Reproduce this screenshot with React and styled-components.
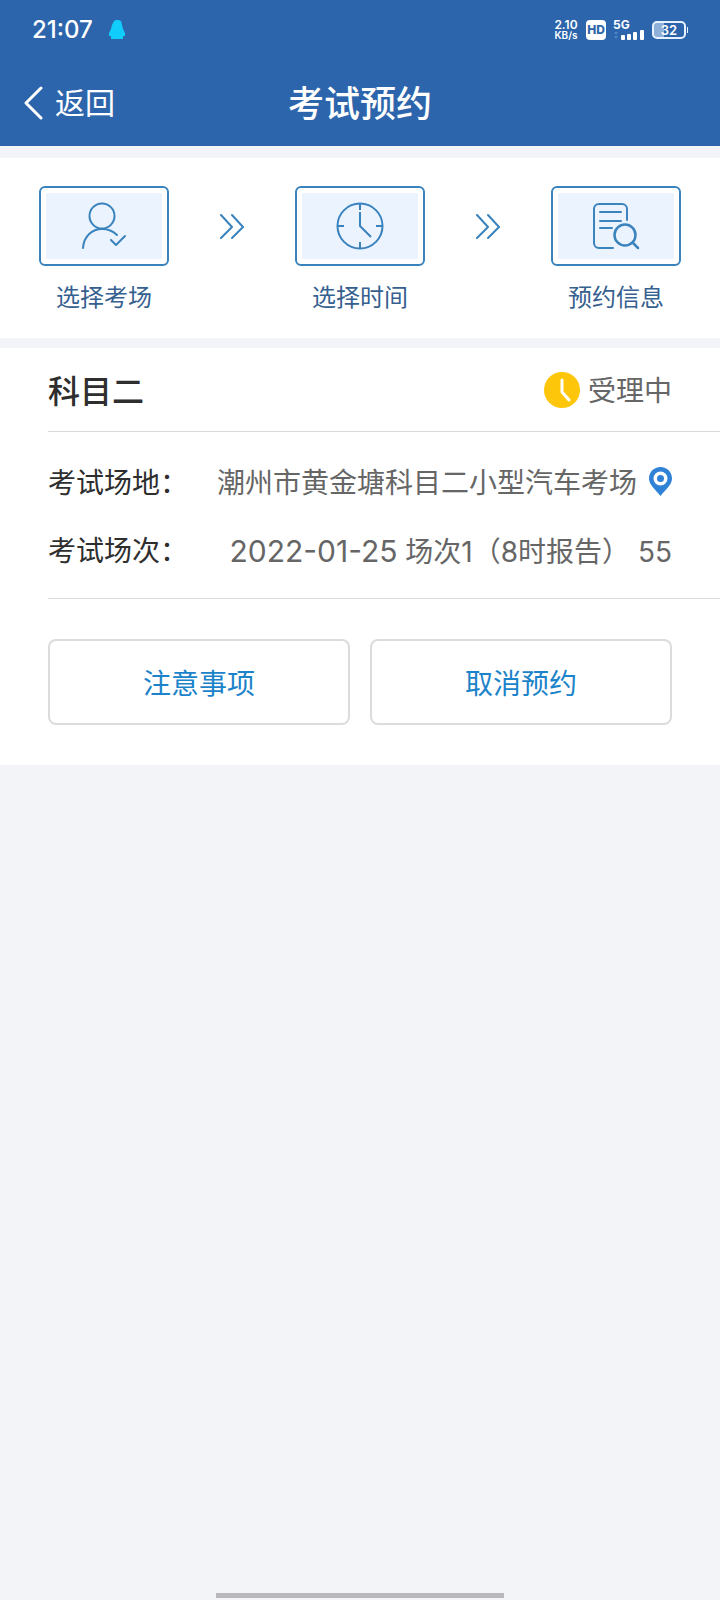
import React from "react";
import styled, { createGlobalStyle } from "styled-components";

const GlobalStyle = createGlobalStyle`
  *, *::before, *::after { box-sizing: border-box; }
  body {
    margin: 0;
    background: #f3f4f8;
    font-family: Inter, "Noto Sans CJK SC", sans-serif;
    color: #2e2e2e;
  }
  svg { display: block; flex: none; }
`;

const Page = styled.div`
  display: flex;
  flex-direction: column;
  min-height: 100vh;
`;

const Header = styled.header`
  background: #2c65ab;
  color: #fff;
`;

const StatusBar = styled.div`
  display: flex;
  align-items: center;
  justify-content: space-between;
  height: 60px;
  padding: 0 32px;
`;

const StatusGroup = styled.div`
  display: flex;
  align-items: center;
  gap: ${(p) => p.$gap}px;
`;

const Time = styled.span`
  font-size: 24px;
  line-height: 32px;
  font-weight: 500;
`;

const Speed = styled.div`
  display: flex;
  flex-direction: column;
  align-items: center;
  width: 26px;
  font-size: 12px;
  line-height: 10px;
  font-weight: 600;
`;

const SpeedUnit = styled.span`
  font-size: 10px;
`;

const HdBadge = styled.span`
  width: 20px;
  height: 20px;
  border-radius: 4px;
  background: #fff;
  color: #2c65ab;
  font-size: 12px;
  line-height: 20px;
  font-weight: 800;
  text-align: center;
`;

const Signal = styled.div`
  display: flex;
  flex-direction: column;
  width: 32px;
  font-size: 12px;
  line-height: 10px;
  font-weight: 700;
`;

const Battery = styled.span`
  display: flex;
  align-items: center;
  gap: 1px;
`;

const BatteryBody = styled.span`
  width: 34px;
  height: 18px;
  border: 2px solid #e6f2ff;
  border-radius: 5px;
  background: linear-gradient(to right, #8fb0d8 32%, transparent 32%);
  font-size: 13px;
  line-height: 14px;
  font-weight: 600;
  text-align: center;
`;

const BatteryTip = styled.span`
  width: 1px;
  height: 6px;
  background: #e6f2ff;
`;

const NavBar = styled.div`
  display: grid;
  grid-template-columns: 1fr auto 1fr;
  align-items: center;
  height: 86px;
  padding: 0 24px;
`;

const BackButton = styled.button`
  display: flex;
  align-items: center;
  justify-self: start;
  gap: 12px;
  padding: 0;
  border: 0;
  background: none;
  color: #fff;
  font: inherit;
  font-size: 30px;
  line-height: 40px;
`;

const Title = styled.h1`
  margin: 0;
  padding-top: 2px;
  font-size: 36px;
  line-height: 44px;
  font-weight: 500;
`;

const Main = styled.main`
  display: flex;
  flex-direction: column;
  gap: 10px;
  padding-top: 12px;
`;

const Steps = styled.ol`
  display: flex;
  justify-content: space-between;
  margin: 0;
  padding: 28px 39px 24px;
  background: #fff;
  list-style: none;
`;

const Step = styled.li`
  display: flex;
  flex-direction: column;
  align-items: center;
  gap: 16px;
  color: #35608f;
  font-size: 24px;
  line-height: 32px;
`;

const StepIcon = styled.div`
  display: flex;
  align-items: center;
  justify-content: center;
  width: 130px;
  height: 80px;
  padding: 5px;
  border: 2px solid #3a83bd;
  border-radius: 6px;
  background: #eaf3fe content-box;
`;

const StepArrow = styled.li`
  display: flex;
  align-items: center;
  height: 80px;
`;

const Card = styled.section`
  padding-left: 48px;
  background: #fff;
`;

const CardHead = styled.div`
  display: flex;
  align-items: center;
  justify-content: space-between;
  height: 84px;
  padding-right: 48px;
  border-bottom: 1px solid #d9d9d9;
`;

const Subject = styled.h2`
  margin: 0;
  padding-top: 4px;
  font-size: 32px;
  line-height: 40px;
  font-weight: 500;
`;

const State = styled.span`
  display: flex;
  align-items: center;
  gap: 8px;
  color: #666;
  font-size: 28px;
  line-height: 40px;
`;

const Details = styled.dl`
  margin: 0;
  padding: 16px 48px 14px 0;
  border-bottom: 1px solid #d9d9d9;
`;

const Detail = styled.div`
  display: flex;
  align-items: center;
  justify-content: space-between;
  height: 68px;
  font-size: 28px;
  line-height: 40px;
  white-space: nowrap;
`;

const Value = styled.dd`
  display: flex;
  align-items: center;
  gap: 12px;
  margin: 0;
  color: #666;
`;

const Text = styled.span`
  display: block;
  padding-top: 2px;
`;

const ExamDate = styled.time`
  font-size: 30px;
`;

const Actions = styled.div`
  display: grid;
  grid-template-columns: 1fr 1fr;
  gap: 20px;
  padding: 40px 48px 40px 0;
`;

const ActionButton = styled.button`
  height: 86px;
  padding: 4px 0 0;
  border: 2px solid #dcdcdc;
  border-radius: 8px;
  background: #fff;
  color: #1b83c9;
  font: inherit;
  font-size: 28px;
  line-height: 40px;
`;

const HomeBar = styled.div`
  align-self: center;
  width: 40%;
  height: 5px;
  margin: auto 0 2px;
  background: #b7b7bc;
`;

const stroke = {
  fill: "none",
  stroke: "#3a83bd",
  strokeWidth: 2,
  strokeLinecap: "round",
  strokeLinejoin: "round",
};

const PenguinIcon = () => (
  <svg width="16" height="20" viewBox="0 0 16 20" aria-hidden="true">
    <path d="M5 1l2-1h3l2 1 1 4 1 4 2 4v3h-2v3H2v-3H0v-3l2-4 1-4z" fill="#10cdfb" />
  </svg>
);

const BackIcon = () => (
  <svg width="19" height="34" viewBox="0 0 19 34" aria-hidden="true">
    <path d="M17 2 2 17l15 15" fill="none" stroke="#fff" strokeWidth="3" strokeLinecap="round" strokeLinejoin="round" />
  </svg>
);

const SignalBars = () => (
  <svg width="31" height="10" viewBox="0 0 31 10" aria-hidden="true">
    <path d="M1 2h4L3 5zM1 6h4L3 9z" fill="#4f86c6" />
    <g fill="#fff">
      <rect x="8" y="5" width="4" height="5" rx="1" />
      <rect x="14" y="4" width="4" height="6" rx="1" />
      <rect x="20" y="2" width="4" height="8" rx="1" />
      <rect x="27" y="0" width="4" height="10" rx="1" />
    </g>
  </svg>
);

const PersonIcon = () => (
  <svg width="46" height="48" viewBox="0 0 46 48" aria-hidden="true" {...stroke}>
    <circle cx="21" cy="14" r="12.500" />
    <path d="M2 46C3 34 11 27 21 27c6 0 11 2 15 6M30 38l5 5 9-9" />
  </svg>
);

const ClockIcon = () => (
  <svg width="48" height="48" viewBox="0 0 48 48" aria-hidden="true" {...stroke} strokeLinecap="butt">
    <circle cx="24" cy="24" r="22.500" />
    <path d="M24 2v6M24 40v6M2 24h6M40 24h6M24 10v14l11 11" />
  </svg>
);

const DocumentIcon = () => (
  <svg width="48" height="48" viewBox="0 0 48 48" aria-hidden="true" {...stroke}>
    <path d="M21 46H7a5 5 0 0 1-5-5V7a5 5 0 0 1 5-5h23a5 5 0 0 1 5 5v11M8 10h21M8 19h21M8 26h12" />
    <circle cx="33" cy="33" r="10.500" strokeWidth="2.500" />
    <path d="m41 41 5 5" strokeWidth="2.500" />
  </svg>
);

const ChevronsIcon = () => (
  <svg width="26" height="26" viewBox="0 0 26 26" aria-hidden="true" {...stroke}>
    <path d="m2 2 11 12L2 25M13 2l11 12-11 11" />
  </svg>
);

const PendingIcon = () => (
  <svg width="36" height="36" viewBox="0 0 36 36" aria-hidden="true">
    <circle cx="18" cy="18" r="18" fill="#fdc60b" />
    <path d="M18 8v12l7 8" fill="none" stroke="#fff" strokeWidth="3" strokeLinecap="round" strokeLinejoin="round" />
  </svg>
);

const PinIcon = () => (
  <svg width="23" height="30" viewBox="0 0 23 30" aria-hidden="true">
    <path
      d="M11.500 0C5 0 0 5 0 11.500 0 18 7 23 11.500 29 16 23 23 18 23 11.500 23 5 18 0 11.500 0zm0 4.500a7 7 0 1 1 0 14 7 7 0 0 1 0-14z"
      fill="#2f82d6"
      fillRule="evenodd"
    />
    <circle cx="11.500" cy="11.500" r="3.500" fill="#2f82d6" />
  </svg>
);

const steps = [
  { label: "选择考场", Icon: PersonIcon },
  { label: "选择时间", Icon: ClockIcon },
  { label: "预约信息", Icon: DocumentIcon },
];

export default function App() {
  return (
    <Page>
      <GlobalStyle />
      <Header>
        <StatusBar>
          <StatusGroup $gap={16}>
            <Time>21:07</Time>
            <PenguinIcon />
          </StatusGroup>
          <StatusGroup $gap={7}>
            <Speed>
              2.10
              <SpeedUnit>KB/s</SpeedUnit>
            </Speed>
            <HdBadge>HD</HdBadge>
            <Signal>
              5G
              <SignalBars />
            </Signal>
            <Battery>
              <BatteryBody>32</BatteryBody>
              <BatteryTip />
            </Battery>
          </StatusGroup>
        </StatusBar>
        <NavBar>
          <BackButton type="button">
            <BackIcon />
            返回
          </BackButton>
          <Title>考试预约</Title>
        </NavBar>
      </Header>
      <Main>
        <Steps>
          {steps.map(({ label, Icon }, i) => (
            <React.Fragment key={label}>
              {i > 0 && (
                <StepArrow aria-hidden="true">
                  <ChevronsIcon />
                </StepArrow>
              )}
              <Step>
                <StepIcon>
                  <Icon />
                </StepIcon>
                {label}
              </Step>
            </React.Fragment>
          ))}
        </Steps>
        <Card>
          <CardHead>
            <Subject>科目二</Subject>
            <State>
              <PendingIcon />
              <Text>受理中</Text>
            </State>
          </CardHead>
          <Details>
            <Detail>
              <Text as="dt">考试场地：</Text>
              <Value>
                <Text>潮州市黄金塘科目二小型汽车考场</Text>
                <PinIcon />
              </Value>
            </Detail>
            <Detail>
              <Text as="dt">考试场次：</Text>
              <Value>
                <Text>
                  <ExamDate>2022-01-25</ExamDate> 场次1（8时报告） 55
                </Text>
              </Value>
            </Detail>
          </Details>
          <Actions>
            <ActionButton type="button">注意事项</ActionButton>
            <ActionButton type="button">取消预约</ActionButton>
          </Actions>
        </Card>
      </Main>
      <HomeBar />
    </Page>
  );
}
